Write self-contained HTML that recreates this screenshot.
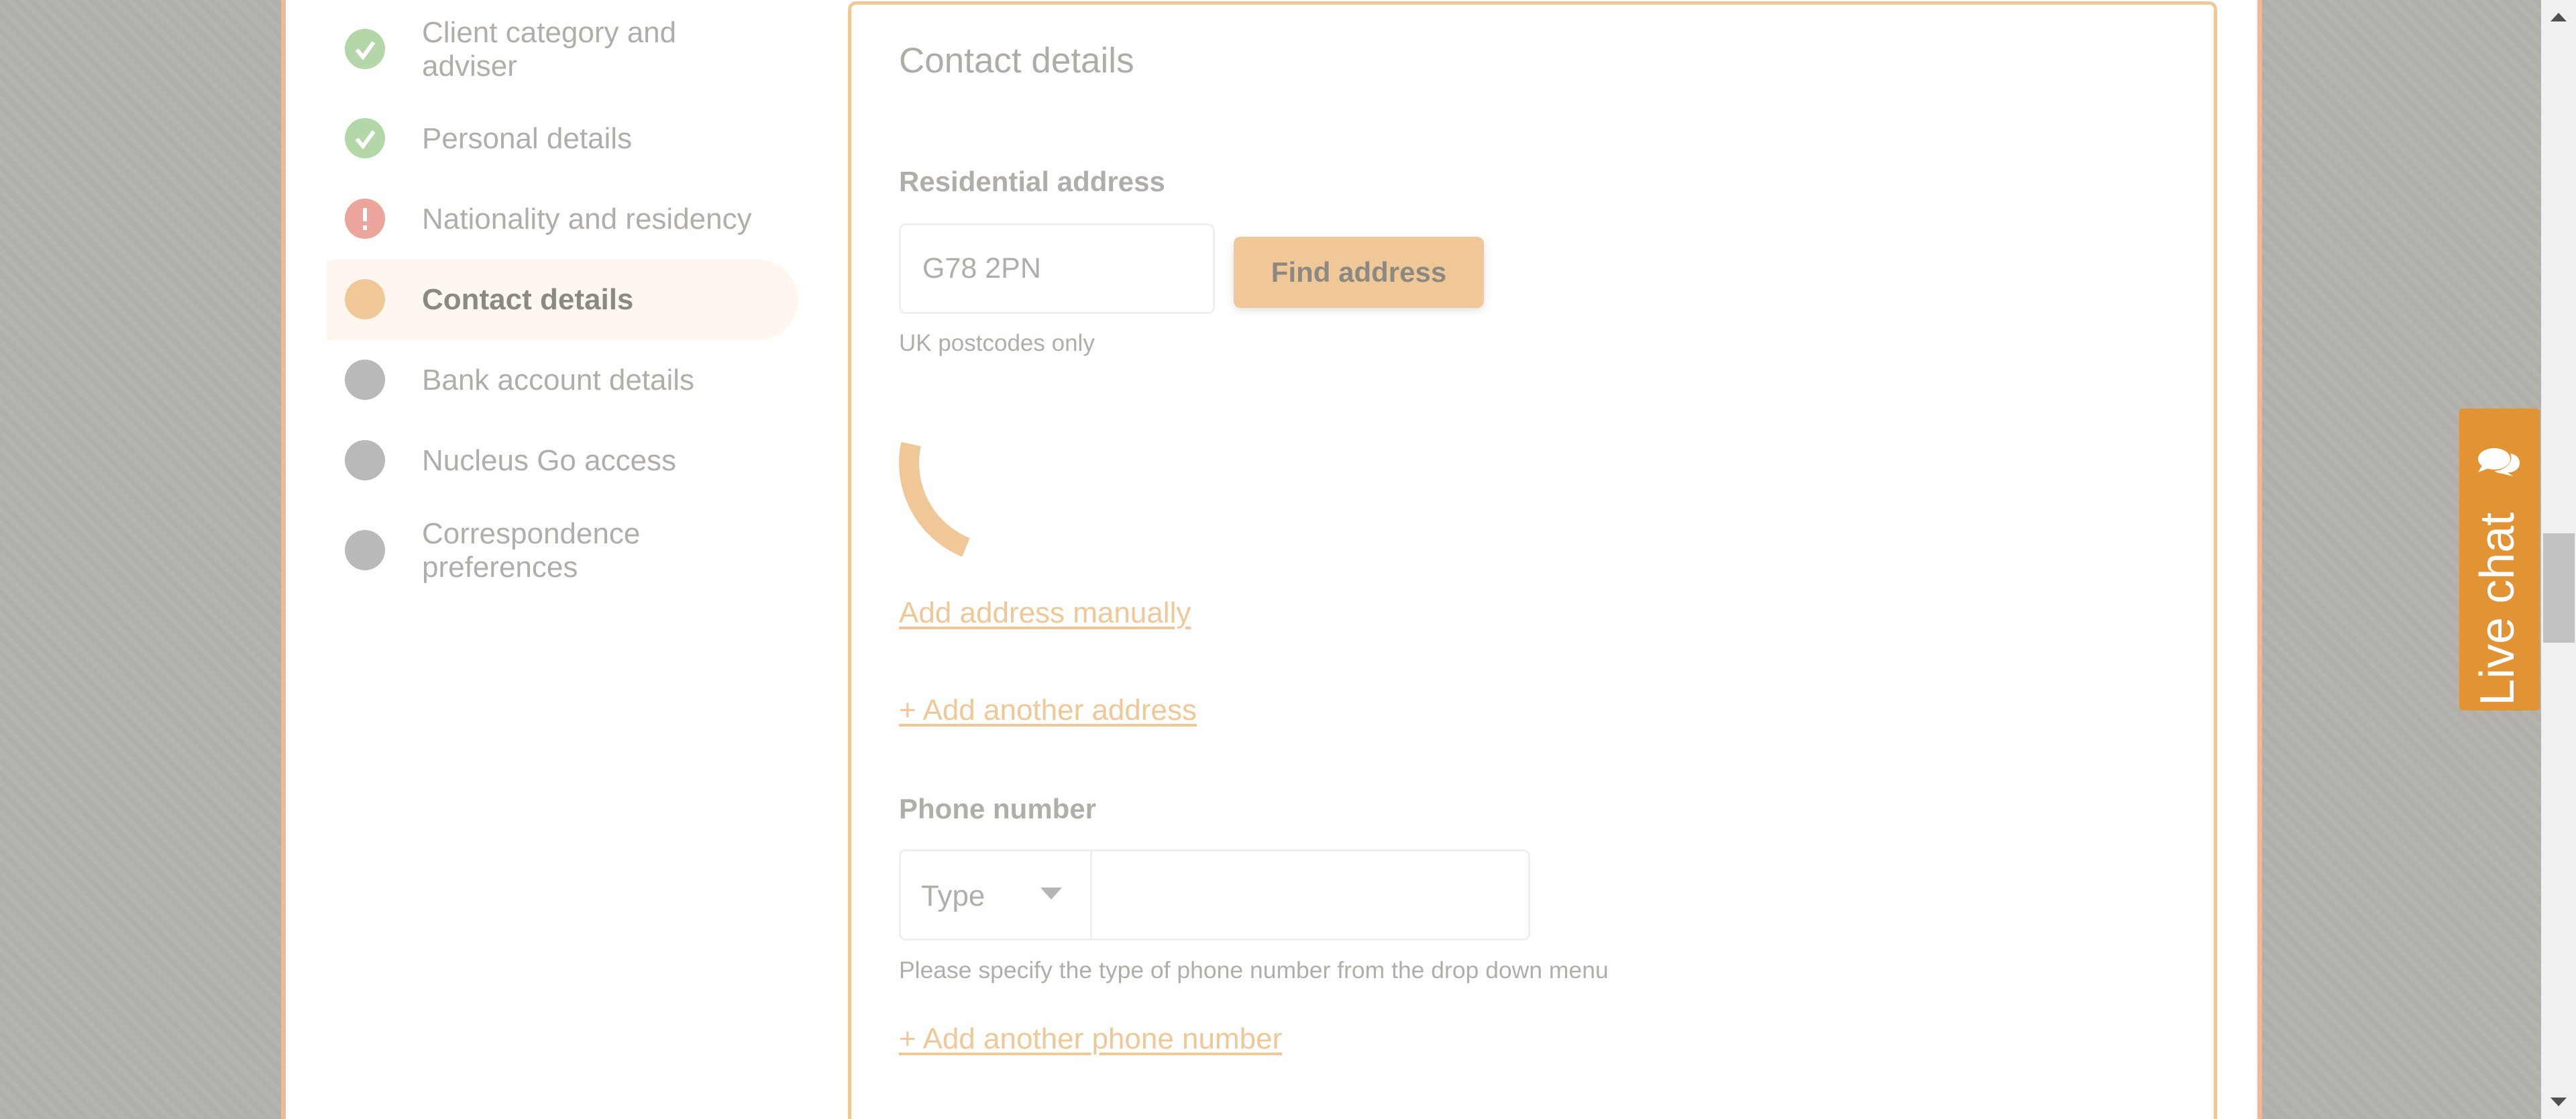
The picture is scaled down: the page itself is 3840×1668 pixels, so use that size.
<!DOCTYPE html>
<html style="overflow:hidden;width:3840px;height:1668px"><head><meta charset="utf-8"><style>
*{margin:0;padding:0;box-sizing:border-box}
body{width:3840px;height:1668px;overflow:hidden;position:relative;font-family:"Liberation Sans",sans-serif;
background:repeating-linear-gradient(45deg,#b4b3ae 0 8px,#b0afaa 8px 16px);}
.a{position:absolute;white-space:nowrap}
.panel{position:absolute;left:419px;top:0;width:2953px;height:1668px;background:#fff;border-left:7px solid #f2b98e;border-right:7px solid #f2b98e}
.dot{position:absolute;left:514px;width:60px;height:60px;border-radius:50%}
.lbl{position:absolute;left:629px;font-size:44px;color:#b0aea8;line-height:50px}
.card{position:absolute;left:1264px;top:2px;width:2041px;height:1680px;border:5px solid #f0c898;border-radius:12px;background:#fff}
.link{position:absolute;left:1340px;font-size:44px;color:#f0c898;text-decoration:underline;text-decoration-thickness:4px;text-underline-offset:6px;line-height:50px}
.sub{position:absolute;left:1340px;font-size:35px;color:#b0aea8;line-height:40px}
.h{position:absolute;left:1340px;font-size:42px;font-weight:bold;color:#b0aea8;line-height:50px}
</style></head><body>
<div class="panel"></div>
<div class="a" style="left:487px;top:387px;width:703px;height:120px;background:#fdf7f0;border-radius:0 60px 60px 0"></div>

<div class="dot" style="top:43px;background:#b3d7a8"></div>
<svg class="a" style="left:514px;top:43px" width="60" height="60"><path d="M18 31 L27 42 L43 20" fill="none" stroke="#fff" stroke-width="6"/></svg>
<div class="lbl" style="top:24px">Client category and<br>adviser</div>

<div class="dot" style="top:176px;background:#b3d7a8"></div>
<svg class="a" style="left:514px;top:176px" width="60" height="60"><path d="M18 31 L27 42 L43 20" fill="none" stroke="#fff" stroke-width="6"/></svg>
<div class="lbl" style="top:182px">Personal details</div>

<div class="dot" style="top:296px;background:#eba59c"></div>
<div class="a" style="left:541px;top:310px;width:6px;height:20px;background:#fff"></div>
<div class="a" style="left:541px;top:336px;width:6px;height:7px;background:#fff"></div>
<div class="lbl" style="top:302px">Nationality and residency</div>

<div class="dot" style="top:416px;background:#f0c898"></div>
<div class="lbl" style="top:422px;font-weight:bold;color:#8c8983">Contact details</div>

<div class="dot" style="top:536px;background:#b9b9b9"></div>
<div class="lbl" style="top:542px">Bank account details</div>
<div class="dot" style="top:656px;background:#b9b9b9"></div>
<div class="lbl" style="top:662px">Nucleus Go access</div>
<div class="dot" style="top:790px;background:#b9b9b9"></div>
<div class="lbl" style="top:771px">Correspondence<br>preferences</div>

<div class="card"></div>
<div class="a" style="left:1340px;top:60px;font-size:53px;color:#aeaca6">Contact details</div>
<div class="h" style="top:246px">Residential address</div>
<div class="a" style="left:1340px;top:333px;width:471px;height:135px;border:3px solid #efefef;border-radius:10px;background:#fff"></div>
<div class="a" style="left:1375px;top:376px;font-size:43px;color:#b0aea8">G78 2PN</div>
<div class="a" style="left:1839px;top:353px;width:373px;height:106px;background:#f0c898;border-radius:10px;box-shadow:0 4px 12px rgba(0,0,0,0.12);font-size:42px;font-weight:bold;color:#8c8983;text-align:center;line-height:106px">Find address</div>
<div class="sub" style="top:492px">UK postcodes only</div>
<svg class="a" style="left:1300px;top:620px" width="250" height="240"><path d="M140 196 A136 136 0 0 1 58 42" fill="none" stroke="#f0c898" stroke-width="30"/></svg>
<div class="link" style="top:889px">Add address manually</div>
<div class="link" style="top:1034px">+ Add another address</div>
<div class="h" style="top:1181px">Phone number</div>
<div class="a" style="left:1340px;top:1266px;width:941px;height:136px;border:3px solid #efefef;border-radius:10px;background:#fff"></div>
<div class="a" style="left:1625px;top:1268px;width:3px;height:132px;background:#efefef"></div>
<div class="a" style="left:1373px;top:1311px;font-size:44px;color:#b0aea8">Type</div>
<svg class="a" style="left:1551px;top:1323px" width="32" height="20"><path d="M0 0 H32 L16 18Z" fill="#b5b5b5"/></svg>
<div class="sub" style="top:1426px;font-size:35.5px">Please specify the type of phone number from the drop down menu</div>
<div class="link" style="top:1524px">+ Add another phone number</div>

<div class="a" style="left:3666px;top:609px;width:120px;height:450px;background:#e29434;border-radius:5px"></div>
<div class="a" style="left:3686px;top:1052px;transform:rotate(-90deg);transform-origin:0 0;font-size:72px;color:#fff;line-height:74px">Live chat</div>
<svg class="a" style="left:3686px;top:664px" width="80" height="56"><ellipse cx="32" cy="20" rx="24" ry="16" fill="#fff"/><path d="M14 30 L8 40 L24 34Z" fill="#fff"/><path d="M56 12 A16 14 0 0 1 52 40 L60 46 L44 42 A20 14 0 0 1 32 38 A28 20 0 0 0 56 12Z" fill="#fff"/></svg>

<div class="a" style="left:3788px;top:0;width:52px;height:1668px;background:#f0f0f0"></div>
<div class="a" style="left:3791px;top:795px;width:47px;height:163px;background:#c1c1c1"></div>
<svg class="a" style="left:3802px;top:19px" width="24" height="14"><path d="M12 0 L24 13 H0Z" fill="#505050"/></svg>
<svg class="a" style="left:3802px;top:1636px" width="24" height="14"><path d="M0 0 H24 L12 13Z" fill="#505050"/></svg>
</body></html>
